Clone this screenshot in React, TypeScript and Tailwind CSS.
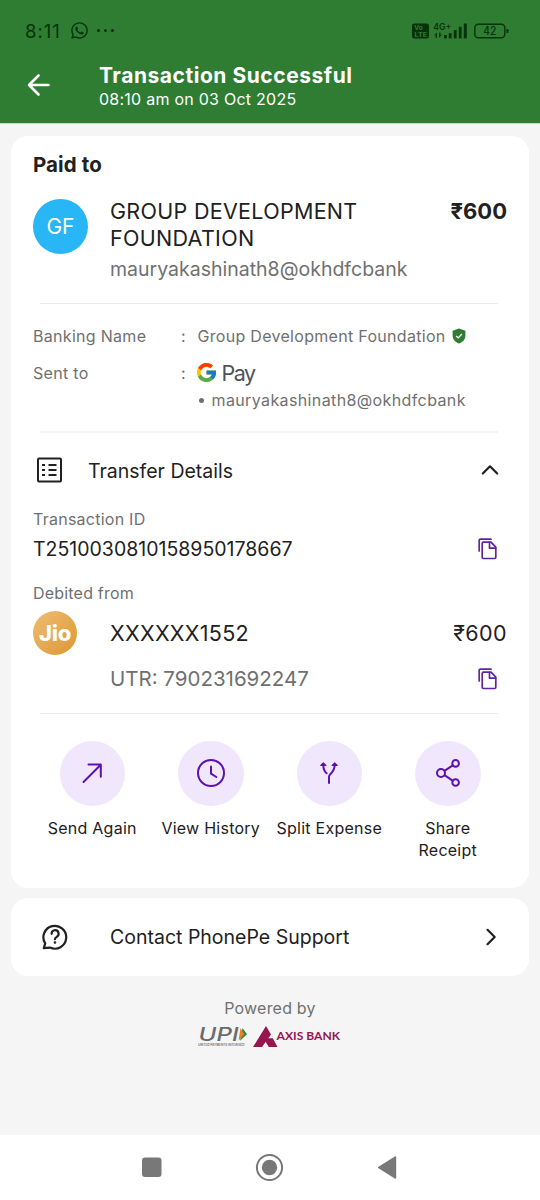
import type { ReactNode } from 'react';
import { FaWhatsapp } from 'react-icons/fa';
import { FcGoogle } from 'react-icons/fc';

const INK = '#07330b';

function StatusBar() {
    return (
        <div className="flex items-center h-[25px] pl-[25px] pr-[31px] text-[#07330b]">
            <span className="text-[18.5px] tracking-[1px] w-[45px] pt-[2px]">8:11</span>
            <FaWhatsapp size={19} />
            <span className="flex gap-[4.2px] ml-[8px]">
                <i className="size-[2.8px] rounded-full bg-[#07330b]" />
                <i className="size-[2.8px] rounded-full bg-[#07330b]" />
                <i className="size-[2.8px] rounded-full bg-[#07330b]" />
            </span>
            <svg className="ml-auto" width="97" height="18" viewBox="0 0 97 18" fill={INK} fontFamily="Inter, sans-serif">
                <rect x="0" y="1.5" width="17" height="15" rx="2.5" />
                <text x="2.2" y="8" fontSize="6.5" fontWeight="700" fill="#2e7d32">Vo</text>
                <text x="2.6" y="15.3" fontSize="6.5" fontWeight="700" fill="#2e7d32" textLength="12.5" lengthAdjust="spacingAndGlyphs">LTE</text>
                <text x="21.3" y="7.8" fontSize="8.5" fontWeight="600" textLength="18" lengthAdjust="spacingAndGlyphs">4G+</text>
                <path d="M25 10.5v5.5h-1.2v-2.6l-1.8.4zM27.2 16v-5.5h1.2v2.2l1.6-.2z" />
                <rect x="32" y="13" width="2.8" height="3.4" />
                <rect x="36.8" y="11.2" width="2.8" height="5.2" />
                <rect x="41.8" y="8" width="2.8" height="8.4" />
                <rect x="46.8" y="4.8" width="2.8" height="11.6" />
                <rect x="51.8" y="1.5" width="3" height="14.9" />
                <rect x="62.8" y="2.2" width="30" height="13.6" rx="3.5" fill="none" stroke={INK} strokeWidth="1.4" />
                <path d="M94.5 7h.8a1.2 1.2 0 0 1 1.2 1.2v1.6a1.2 1.2 0 0 1-1.2 1.2h-.8z" />
                <text x="71.3" y="13.2" fontSize="11.5" fontWeight="500" textLength="13" lengthAdjust="spacingAndGlyphs">42</text>
            </svg>
        </div>
    );
}

function Header() {
    return (
        <header className="h-[124px] pt-[18px] bg-[#2e7d32] border-b border-[#c3d8c4]">
            <StatusBar />
            <div className="flex mt-[20px] pl-[27px] text-white">
                <svg className="mt-[10px]" width="24" height="24" viewBox="0 0 24 24" fill="none" stroke="currentColor" strokeWidth="2.6" strokeLinecap="round" strokeLinejoin="round">
                    <path d="M21.5 12H2M11.5 2.5 2 12l9.5 9.5" />
                </svg>
                <div className="ml-[48px]">
                    <h1 className="text-[21px] leading-[25px] font-bold tracking-[0.54px]">Transaction Successful</h1>
                    <p className="text-[16px] leading-[22px] tracking-[0.25px]">08:10 am on 03 Oct 2025</p>
                </div>
            </div>
        </header>
    );
}

function CopyIcon() {
    return (
        <svg className="mr-[10px]" width="19" height="22" viewBox="0 0 19 22" fill="none" stroke="#5f259f" strokeWidth="1.7" strokeLinejoin="round" strokeLinecap="round">
            <path d="M1.2 13V2.2a1 1 0 0 1 1-1H13" />
            <path d="M5.4 4.2h7.6l4.8 5v10.1a1.2 1.2 0 0 1-1.2 1.2H5.4a1.2 1.2 0 0 1-1.2-1.2V5.4a1.2 1.2 0 0 1 1.2-1.2z" />
            <path d="M11.5 4.4v5.8h6" />
        </svg>
    );
}

function Action({ label, children }: { label: string; children: ReactNode }) {
    return (
        <div className="flex flex-col items-center">
            <div className="size-[65.5px] rounded-full bg-[#f1e7fc] flex items-center justify-center">
                <svg width="36" height="36" viewBox="0 0 36 36" fill="none" stroke="#5b12b0" strokeWidth="2" strokeLinecap="round" strokeLinejoin="round">
                    {children}
                </svg>
            </div>
            <span className="mt-[10.5px] text-[16px] leading-[22.5px] tracking-[0.25px] text-center whitespace-pre-line">{label}</span>
        </div>
    );
}

function PaymentCard() {
    return (
        <section className="mt-[12px] mx-[11px] h-[751.5px] rounded-[17px] bg-white px-[22px] pt-[14px]">
            <h2 className="text-[20.5px] leading-[30px] font-bold tracking-[0.1px]">Paid to</h2>

            <div className="flex items-start mt-[18px]">
                <div className="mt-px size-[55px] rounded-full bg-[#29b6f6] text-white text-[21px] flex items-center justify-center">GF</div>
                <div className="ml-[22px] flex-1">
                    <p className="text-[21.5px] leading-[27px] tracking-[0.3px]">GROUP DEVELOPMENT<br />FOUNDATION</p>
                    <p className="text-[19.5px] leading-[34px] text-[#707070]">mauryakashinath8@okhdfcbank</p>
                </div>
                <span className="text-[22px] leading-[27px] font-bold">₹600</span>
            </div>

            <div className="mt-[17px] ml-[7px] mr-[9px] h-px bg-[#ececec]" />

            <div className="mt-[14px] text-[16px] tracking-[0.3px] text-[#707070]">
                <div className="flex items-center h-[35px]">
                    <span className="w-[148px]">Banking Name</span>
                    <span className="w-[16.5px]">:</span>
                    <span>Group Development Foundation</span>
                    <svg className="ml-[6px]" width="14" height="16" viewBox="0 0 14 16">
                        <path d="M7 .4 13.4 2.8v5c0 3.6-2.8 6.4-6.4 7.8C3.4 14.2.6 11.4.6 7.8v-5z" fill="#2e7d32" />
                        <path d="m4.2 8 2 1.9 3.7-3.9" fill="none" stroke="#fff" strokeWidth="1.3" />
                    </svg>
                </div>
                <div className="flex items-center h-[39px]">
                    <span className="w-[148px]">Sent to</span>
                    <span className="w-[14px]">:</span>
                    <FcGoogle size={23} />
                    <span className="ml-[3.5px] text-[21.5px] tracking-[-1.5px] text-[#4f5358] pt-px">Pay</span>
                </div>
                <div className="flex items-center h-[16px] pl-[166px] tracking-[0.38px]">
                    <i className="size-[5px] rounded-full bg-[#707070] mr-[7.5px]" />
                    <span>mauryakashinath8@okhdfcbank</span>
                </div>
            </div>

            <div className="mt-[23px] ml-[7px] mr-[9px] h-[2px] bg-[#f5f5f5]" />

            <div className="flex items-center mt-[23px] h-[29px] pl-[4px] pr-[8px]">
                <svg className="mb-px" width="25" height="26" viewBox="0 0 25 26" fill="none" stroke="#212121" strokeWidth="2">
                    <rect x="1" y="1.5" width="23" height="23" rx="1" />
                    <path d="M5 8h3M11.5 8h8M5 13h3M11.5 13h8M5 18h3M11.5 18h8" />
                </svg>
                <h3 className="ml-[26px] text-[19.5px] pt-[2px]">Transfer Details</h3>
                <svg className="ml-auto mb-[2px]" width="18" height="12" viewBox="0 0 18 12" fill="none" stroke="#212121" strokeWidth="2.2" strokeLinecap="round" strokeLinejoin="round">
                    <path d="m1.8 9.5 7.2-7.2 7.2 7.2" />
                </svg>
            </div>

            <p className="mt-[24px] text-[16px] leading-[20px] tracking-[0.25px] text-[#707070]">Transaction ID</p>
            <div className="flex items-center justify-between h-[40px]">
                <span className="text-[19.5px] pt-[2px]">T2510030810158950178667</span>
                <CopyIcon />
            </div>

            <p className="mt-[14px] text-[16px] leading-[20px] tracking-[0.2px] text-[#707070]">Debited from</p>
            <div className="flex items-center mt-[8px] h-[44px] text-[21.5px]">
                <div className="size-[44px] rounded-full bg-gradient-to-br from-[#efbd72] to-[#dc9730] text-white text-[22px] font-extrabold tracking-[-0.2px] flex items-center justify-center">Jio</div>
                <span className="ml-[33px] flex-1 tracking-[0.3px] pt-px">XXXXXX1552</span>
                <span className="tracking-[0.4px] pt-px">₹600</span>
            </div>
            <div className="flex items-center justify-between h-[48px] pl-[77px]">
                <span className="text-[20.5px] text-[#707070]">UTR: 790231692247</span>
                <CopyIcon />
            </div>

            <div className="mt-[10px] ml-[7px] mr-[9px] h-px bg-[#ececec]" />

            <div className="grid grid-cols-4 mt-[26.5px] whitespace-nowrap">
                <Action label="Send Again">
                    <path d="M9.5 27 26.5 10M14.5 9.5h12.3v12.3" />
                </Action>
                <Action label="View History">
                    <circle cx="18" cy="18" r="13" />
                    <path d="M18 11.5v7.2l5.3 3.3" />
                </Action>
                <Action label="Split Expense">
                    <path d="M18 28v-6.500c0-2.500 5.700-4.200 5.700-11.500M12.300 10c0 4 .9 6.300 3.300 8.300" />
                    <path d="m9.800 10.500 2.500-2.500 2.500 2.500zM21.200 10.500l2.500-2.500 2.500 2.500z" fill="#5b12b0" strokeWidth="1.2" />
                </Action>
                <Action label={'Share\nReceipt'}>
                    <circle cx="11" cy="18" r="4" />
                    <circle cx="25.6" cy="8.4" r="3.3" />
                    <circle cx="25.6" cy="27.5" r="3.3" />
                    <path d="m14.5 15.8 8.2-5.500M14.500 20.200l8.200 5.400" />
                </Action>
            </div>
        </section>
    );
}

function SupportCard() {
    return (
        <section className="mt-[10.5px] mx-[11px] h-[78px] rounded-[17px] bg-white flex items-center pl-[30px] pr-[32px]">
            <svg width="28" height="28" viewBox="0 0 28 28" fill="none" stroke="#212121" strokeWidth="2.2" strokeLinecap="round" strokeLinejoin="round">
                <path d="M4.200 20.400A11.400 11.400 0 1 1 9 24.600l-6.200.5z" />
                <path d="M10.600 10.800a3.500 3.500 0 1 1 5 3.100c-1.200.6-1.600 1.200-1.600 2.300" />
                <circle cx="14" cy="19.5" r=".7" fill="#212121" strokeWidth="1.3" />
            </svg>
            <span className="ml-[41px] text-[19.5px] pt-[2px]">Contact PhonePe Support</span>
            <svg className="ml-auto" width="12" height="18" viewBox="0 0 12 18" fill="none" stroke="#212121" strokeWidth="2.2" strokeLinecap="round" strokeLinejoin="round">
                <path d="m2.500 1.800 7.200 7.200-7.200 7.200" />
            </svg>
        </section>
    );
}

function PoweredBy() {
    return (
        <div className="flex flex-col items-center mt-[22px]">
            <span className="text-[16px] leading-[20px] tracking-[0.2px] text-[#707070]">Powered by</span>
            <svg className="mt-[6px]" width="144" height="26" viewBox="0 0 144 26">
                <g fill="#6b6b6b" fontFamily="Inter, sans-serif">
                    <text x="0.5" y="16.8" fontSize="18" fontWeight="500" fontStyle="italic" textLength="40" lengthAdjust="spacingAndGlyphs">UPI</text>
                    <text x="0" y="21.8" fontSize="3.2" fontWeight="600" fontStyle="italic" textLength="47" lengthAdjust="spacingAndGlyphs">UNITED PAYMENTS INTERFACE</text>
                </g>
                <path d="m44.500 4 4.500 6.300-7 6.500z" fill="#2f8a3c" />
                <path d="m42.500 4 3.600 6.300-5.600 6.500z" fill="#ee7d26" />
                <g fill="#97144d">
                    <path d="m68 2 5 8.500L64 23h-9z" />
                    <path d="M65.500 14.200h9.300L79.500 23h-8.700z" />
                    <text x="78.600" y="15.500" fontFamily="Lato, sans-serif" fontSize="11.8" fontWeight="700" textLength="63.500" lengthAdjust="spacingAndGlyphs">AXIS BANK</text>
                </g>
            </svg>
        </div>
    );
}

function NavBar() {
    return (
        <nav className="mt-auto h-[65px] bg-white flex items-center pl-[141px]">
            <svg width="257" height="30" viewBox="0 0 257 30" fill="#787878">
                <rect x="1" y="4.5" width="19.5" height="19.5" rx="3" />
                <circle cx="128.5" cy="14.5" r="12.6" fill="none" stroke="#787878" strokeWidth="2" />
                <circle cx="128.5" cy="14.5" r="7.7" />
                <path d="M237.500 13.700 253.800 3.500c.8-.5 1.400-.2 1.400.7v20.600c0 .9-.6 1.200-1.400.7l-16.300-10.200c-.8-.5-.8-1.100 0-1.600z" />
            </svg>
        </nav>
    );
}

export default function App() {
    return (
        <div className="w-[540px] h-[1200px] flex flex-col overflow-hidden bg-[#f5f5f5] text-[#212121] font-['Inter',sans-serif]">
            <Header />
            <PaymentCard />
            <SupportCard />
            <PoweredBy />
            <NavBar />
        </div>
    );
}
